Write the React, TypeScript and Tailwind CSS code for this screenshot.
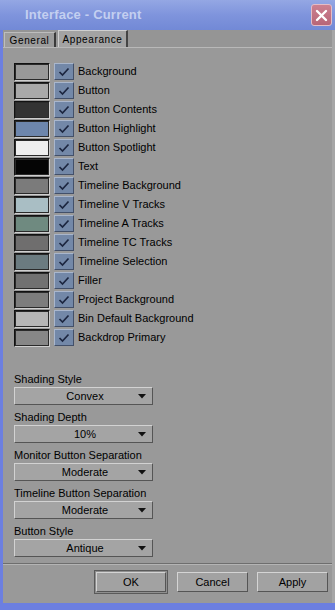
import React from "react";

const rows: { label: string; color: string }[] = [
  { label: "Background", color: "#999999" },
  { label: "Button", color: "#a9a9a9" },
  { label: "Button Contents", color: "#333333" },
  { label: "Button Highlight", color: "#6d86ac" },
  { label: "Button Spotlight", color: "#eeeeee" },
  { label: "Text", color: "#050505" },
  { label: "Timeline Background", color: "#7b7b7b" },
  { label: "Timeline V Tracks", color: "#a9bec4" },
  { label: "Timeline A Tracks", color: "#6f8a80" },
  { label: "Timeline TC Tracks", color: "#6f6e6e" },
  { label: "Timeline Selection", color: "#6b7b80" },
  { label: "Filler", color: "#717171" },
  { label: "Project Background", color: "#7d7d7d" },
  { label: "Bin Default Background", color: "#b6b6b6" },
  { label: "Backdrop Primary", color: "#878787" },
];

const selects: { label: string; value: string }[] = [
  { label: "Shading Style", value: "Convex" },
  { label: "Shading Depth", value: "10%" },
  { label: "Monitor Button Separation", value: "Moderate" },
  { label: "Timeline Button Separation", value: "Moderate" },
  { label: "Button Style", value: "Antique" },
];

function Check() {
  return (
    <svg width="12" height="10" viewBox="0 0 12 10">
      <path d="M1.5 5 L4.5 8 L10.5 1.5" fill="none" stroke="#1c2640" strokeWidth="1.7" />
    </svg>
  );
}

export default function App() {
  return (
    <div
      className="w-[335px] h-[610px] bg-[#6c7fe0] flex flex-col overflow-hidden text-black"
      style={{ fontFamily: '"Liberation Sans", Arial, sans-serif' }}
    >
      {/* title bar */}
      <div className="h-[30px] shrink-0 flex items-center justify-between bg-gradient-to-b from-[#94a7e4] via-[#7f94dc] to-[#7289d6] pl-[25px] pr-[3px]">
        <span className="text-[13px] font-bold text-[#c3cff0] tracking-[0.2px]">Interface - Current</span>
        <div className="w-[21px] h-[22px] rounded-[3px] bg-gradient-to-b from-[#cc8090] to-[#b86678] border border-[#e4bcc6] flex items-center justify-center">
          <svg width="13" height="13" viewBox="0 0 13 13">
            <path d="M2 2 L11 11 M11 2 L2 11" stroke="#ffffff" strokeWidth="2.4" strokeLinecap="round" />
          </svg>
        </div>
      </div>

      {/* body */}
      <div className="flex-1 ml-[3px] mb-[7px] bg-[#999999] border-r-[3px] border-[#a6a6a6] flex flex-col">
        {/* tabs */}
        <div className="h-[17px] shrink-0 flex items-end pl-[1px] bg-[#959595]">
          <div className="h-[15px] w-[52px] border-r-2 border-[#3a3a3a] border-l border-t border-l-[#bdbdbd] border-t-[#bdbdbd] flex items-center justify-center text-[10px] tracking-[0.6px] bg-[#9c9c9c]">
            General
          </div>
          <div className="ml-[2px] h-[17px] w-[70px] border-t border-l border-[#cfcfcf] border-r-2 border-r-[#444] flex items-center justify-center text-[10px] tracking-[0.6px] bg-[#a3a3a3]">
            Appearance
          </div>
        </div>

        {/* panel */}
        <div className="flex-1 border-t border-[#b8b8b8] border-b border-b-[#6e6e6e] flex flex-col pl-[11px] pt-[14px]">
          <div className="flex flex-col">
            {rows.map((r) => (
              <div key={r.label} className="h-[19px] flex items-center">
                <div className="w-[36px] h-[18px] border border-t-[#111] border-l-[#111] border-r-[#cfcfcf] border-b-[#cfcfcf]">
                  <div className="w-full h-full border border-[#2a2a2a]" style={{ backgroundColor: r.color }} />
                </div>
                <div className="ml-[4px] w-[20px] h-[17px] bg-[#7388a8] border border-t-[#a9b6cc] border-l-[#a9b6cc] border-r-[#435069] border-b-[#435069] flex items-center justify-center">
                  <Check />
                </div>
                <span className="ml-[4px] text-[11px] leading-none">{r.label}</span>
              </div>
            ))}
          </div>

          <div className="mt-[25px] flex flex-col">
            {selects.map((s) => (
              <div key={s.label} className="flex flex-col h-[38px]">
                <div className="h-[14px] text-[11px] leading-[14px]">{s.label}</div>
                <div className="mt-[1px] w-[139px] h-[18px] bg-[#a4a4a4] border border-t-[#d2d2d2] border-l-[#d2d2d2] border-r-[#555] border-b-[#555] flex items-center relative">
                  <span className="flex-1 text-center text-[11px] leading-none pl-[3px]">{s.value}</span>
                  <svg width="8" height="5" viewBox="0 0 8 5" className="absolute right-[6px] top-[6px]">
                    <path d="M0 0 L8 0 L4 4.5 Z" fill="#111" />
                  </svg>
                </div>
              </div>
            ))}
          </div>
        </div>

        {/* buttons */}
        <div className="h-[39px] shrink-0 border-t border-[#b4b4b4] flex items-start pt-[7px] pl-[91px]">
          <div className="w-[74px] h-[24px] border border-[#5a5a5a] bg-[#8f8f8f] p-[1px] -mt-[2px]">
            <div className="w-full h-full bg-[#a2a2a2] border border-t-[#d4d4d4] border-l-[#d4d4d4] border-r-[#555] border-b-[#555] flex items-center justify-center text-[11px]">
              OK
            </div>
          </div>
          <div className="ml-[9px] w-[71px] h-[20px] bg-[#a2a2a2] border border-t-[#d4d4d4] border-l-[#d4d4d4] border-r-[#555] border-b-[#555] flex items-center justify-center text-[11px]">
            Cancel
          </div>
          <div className="ml-[9px] w-[71px] h-[20px] bg-[#a2a2a2] border border-t-[#d4d4d4] border-l-[#d4d4d4] border-r-[#555] border-b-[#555] flex items-center justify-center text-[11px]">
            Apply
          </div>
        </div>
      </div>
    </div>
  );
}
